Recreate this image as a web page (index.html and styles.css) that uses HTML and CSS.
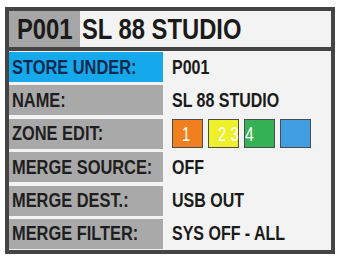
FILE: index.html
```html
<!DOCTYPE html>
<html>
<head>
<meta charset="utf-8">
<link rel="stylesheet" href="styles.css">
</head>
<body>
<div class="screen">
  <div class="header">
    <div class="hdr-id"><span class="t">P001</span></div>
    <div class="hdr-name"><span class="t">SL 88 STUDIO</span></div>
  </div>
  <div class="rows">
    <div class="label active"><span class="t">STORE UNDER:</span></div>
    <div class="value"><span class="t">P001</span></div>
    <div class="label"><span class="t">NAME:</span></div>
    <div class="value"><span class="t">SL 88 STUDIO</span></div>
    <div class="label"><span class="t">ZONE EDIT:</span></div>
    <div class="value zones">
      <div class="zone orange"><span class="t d1">1</span></div>
      <div class="zone yellow"><span class="t d23">23</span></div>
      <div class="zone green"><span class="t d4">4</span></div>
      <div class="zone blue"></div>
    </div>
    <div class="label"><span class="t">MERGE SOURCE:</span></div>
    <div class="value"><span class="t">OFF</span></div>
    <div class="label"><span class="t">MERGE DEST.:</span></div>
    <div class="value"><span class="t">USB OUT</span></div>
    <div class="label"><span class="t">MERGE FILTER:</span></div>
    <div class="value"><span class="t">SYS OFF - ALL</span></div>
  </div>
</div>
</body>
</html>
```

FILE: styles.css
```css
html, body {
  margin: 0;
  padding: 0;
  background: #ffffff;
}

body {
  font-family: "Liberation Sans", Arial, sans-serif;
  font-weight: bold;
  color: #1c1c1c;
}

.t {
  display: inline-block;
  white-space: nowrap;
  transform: scaleX(0.82);
  transform-origin: left center;
}

.screen {
  margin: 7px 0 0 5px;
  width: 322px;
  border: 4px solid #444444;
  background: #f3f3f3;
}

.header {
  display: flex;
  height: 36px;
  border-bottom: 4px solid #444444;
  font-size: 29px;
  line-height: 36px;
  white-space: nowrap;
}

.hdr-id {
  flex: none;
  width: 63px;
  padding-left: 8px;
  background: #a6a6a6;
  color: #1a1a1a;
  overflow: hidden;
}

.hdr-name {
  padding-left: 2px;
  color: #1a1a1a;
}

.rows {
  display: grid;
  grid-template-columns: 154px 1fr;
  grid-auto-rows: 30px;
  row-gap: 3.4px;
  padding: 1px 0;
  font-size: 20px;
}

.label {
  display: flex;
  align-items: center;
  padding-left: 3px;
  background: #a9a9a9;
  color: #1e1e1e;
  overflow: hidden;
}

.label.active {
  background: #15a9ec;
  color: #10294f;
}

.value {
  display: flex;
  align-items: center;
  padding-left: 9px;
  font-size: 19.5px;
  color: #1a1a1a;
}

.zones {
  gap: 5px;
}

.zone {
  box-sizing: border-box;
  width: 31px;
  height: 29px;
  border: 1px solid #4c4c4c;
  display: flex;
  align-items: center;
  color: #ffffff;
  font-weight: normal;
  font-size: 21px;
}

.orange { background: #f0801e; }
.yellow { background: #eef02a; }
.green  { background: #35b255; }
.blue   { background: #3f9fe2; }

.t.d1 { margin-left: 9px; transform: scaleX(0.7); }
.t.d23 { margin-left: 9px; letter-spacing: 6px; transform: scaleX(0.7); }
.t.d4 { margin-left: 0; transform: scaleX(0.75); }
```
